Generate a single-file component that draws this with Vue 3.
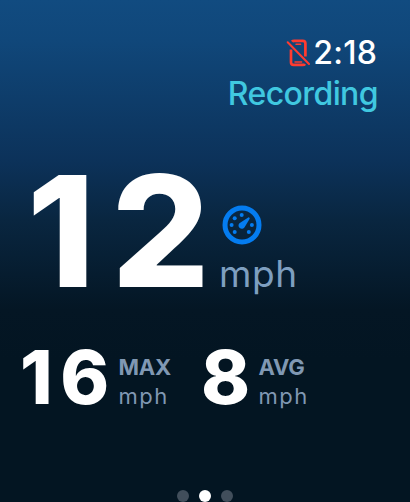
<script setup>
// 手表速度记录界面：主速度 + 最大/平均速度
const unit = 'mph'
const speed = 12

const stats = [
  { key: 'max', label: 'MAX', value: 16 },
  { key: 'avg', label: 'AVG', value: 8 }
]

// 表盘刻度点
const ticks = [
  { x: 9.6, y: 20 },
  { x: 12.7, y: 13.3 },
  { x: 19.7, y: 10 },
  { x: 29.9, y: 20 },
  { x: 12.7, y: 27 },
  { x: 26.8, y: 27 }
]

const pages = 3
const activePage = 2
</script>

<template>
  <div class="watch">
    <!-- 顶部状态 -->
    <header class="status">
      <div class="status-row">
        <svg class="phone-icon" viewBox="0 0 24 30">
          <path d="M5 11.5V24.2q0 2.6 2.6 2.6h9.2q1.6 0 2.2-.9M6 3.7q.7-.9 2.2-.9h8.6q2.6 0 2.6 2.6v13" />
          <path class="thin" d="M10 6.2h4.6M9 24h6.6" />
          <path class="slash" d="M1.7 4.3 23 26" />
        </svg>
        <span class="time">2:18</span>
      </div>
      <div class="state">Recording</div>
    </header>

    <!-- 当前速度 -->
    <section class="speed">
      <span class="speed-value">{{ speed }}</span>
      <div class="speed-side">
        <svg class="gauge" viewBox="0 0 40 40">
          <circle class="ring" cx="20" cy="20" r="17" />
          <circle v-for="(t, i) in ticks" :key="i" class="tick" :cx="t.x" :cy="t.y" r="2" />
          <path class="tick" d="M26.6 12.2q1.4.2 1.1 1.5L22.6 22.2A3.3 3.3 0 1 1 17.4 18.2Z" />
        </svg>
        <span class="speed-unit">{{ unit }}</span>
      </div>
    </section>

    <!-- 最大值与平均值 -->
    <section class="stats">
      <div v-for="s in stats" :key="s.key" class="stat" :class="s.key">
        <span class="stat-value">{{ s.value }}</span>
        <div class="stat-side">
          <span class="stat-label">{{ s.label }}</span>
          <span class="stat-unit">{{ unit }}</span>
        </div>
      </div>
    </section>

    <!-- 分页圆点 -->
    <nav class="dots">
      <i v-for="n in pages" :key="n" class="dot" :class="{ on: n === activePage }"></i>
    </nav>
  </div>
</template>

<style>
body { margin: 0; background: #031522; }
</style>

<style scoped>
.watch {
  display: flex; flex-direction: column; box-sizing: border-box;
  width: 410px; height: 502px; overflow: hidden; padding-top: 32px;
  background: linear-gradient(#114b80 0, #10477a 40px, #0c325a 160px, #092640 220px, #041624 310px, #031522 360px, #031522 100%);
  font-family: Inter, "Liberation Sans", sans-serif; color: #fff;
}
/* 顶部状态 */
.status { padding-right: 33px; text-align: right; font-size: 32px; line-height: 41px; font-weight: 500; }
.status-row { display: flex; justify-content: flex-end; align-items: center; height: 41px; }
.phone-icon { width: 24px; height: 30px; margin-right: 3px; fill: none; stroke: #ff3b30; stroke-width: 2.7; stroke-linecap: butt; }
.phone-icon .thin { stroke-width: 1.5; stroke-linecap: round; }
.phone-icon .slash { stroke-width: 2; stroke-linecap: round; }
.time { letter-spacing: 0.2px; }
.state { margin-right: -1px; letter-spacing: -0.6px; color: #40c8e0; }

/* 当前速度 */
.speed { display: flex; align-items: flex-end; height: 120px; margin-top: 57px; padding-left: 27px; }
.speed-value { width: 193px; font-size: 154px; line-height: 120px; font-weight: 800; letter-spacing: 16.5px; white-space: nowrap; }
.speed-side { display: flex; flex-direction: column; gap: 11px; }
.gauge { width: 40px; height: 40px; margin-left: 1.6px; }
.ring { fill: none; stroke: #047cf0; stroke-width: 5; }
.tick { fill: #047cf0; }
.speed-unit { margin-left: -1px; font-size: 37px; line-height: 35px; letter-spacing: 0.6px; color: #7e9fc0; }

/* 最大值与平均值 */
.stats { display: flex; margin-top: 56px; padding-left: 20px; }
.stat { display: flex; height: 60px; }
.stat.max { width: 181px; }
.stat-value { font-size: 74px; line-height: 60px; font-weight: 800; letter-spacing: 7.5px; white-space: nowrap; }
.max .stat-value { width: 98.5px; }
.avg .stat-value { width: 57.5px; }
.stat-side { display: flex; flex-direction: column; padding-top: 6px; font-size: 22px; line-height: 29px; color: #8098b3; }
.stat-label { font-weight: 700; letter-spacing: -0.2px; }
.stat-unit { letter-spacing: 1.5px; }

/* 分页圆点 */
.dots { display: flex; justify-content: center; gap: 10px; margin-top: 83px; }
.dot { flex: none; width: 12px; height: 12px; border-radius: 50%; background: #414e5b; }
.dot.on { background: #fff; }
</style>
